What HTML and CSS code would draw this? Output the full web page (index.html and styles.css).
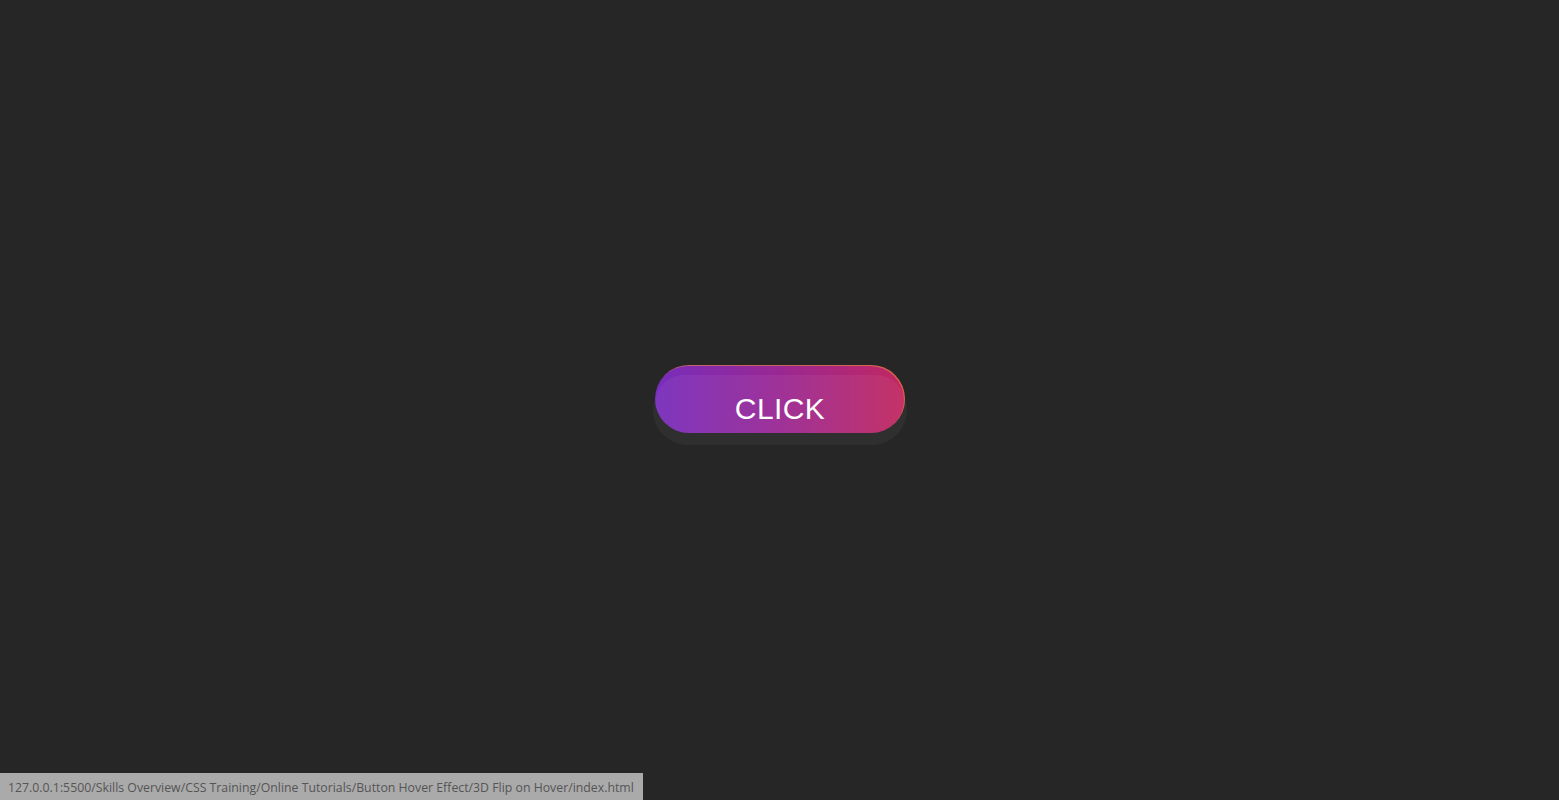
FILE: index.html
```html
<!DOCTYPE html>
<html>
<head>
<meta charset="utf-8">
<link rel="stylesheet" href="styles.css">
</head>
<body>
<main class="stage">
  <div class="btn-wrap">
    <div class="btn-shadow"></div>
    <button class="btn"><span class="btn-face"></span><span class="btn-label">CLICK</span></button>
  </div>
</main>
<div class="status">127.0.0.1:5500/Skills Overview/CSS Training/Online Tutorials/Button Hover Effect/3D Flip on Hover/index.html</div>
</body>
</html>
```
FILE: styles.css
```css
html, body {
  margin: 0;
  padding: 0;
  height: 100%;
  background: #262626;
  overflow: hidden;
}
.stage {
  height: 800px;
  display: flex;
  align-items: flex-start;
  justify-content: center;
  padding-top: 365px;
  box-sizing: border-box;
}
.btn-wrap {
  position: relative;
  width: 250px;
  height: 68px;
  margin-left: 1px;
}
.btn-shadow {
  position: absolute;
  left: -2px;
  right: -2px;
  top: 10px;
  height: 70px;
  border-radius: 35px;
  background: #2f2f2f;
}
.btn {
  position: relative;
  display: block;
  width: 250px;
  height: 68px;
  border: none;
  padding: 0;
  border-radius: 34px;
  background: linear-gradient(90deg, #772dbc 0%, #9a2893 50%, #c2285f 100%);
  box-shadow: inset -1px 1px 0 rgba(230, 140, 60, 0.6);
  overflow: hidden;
  cursor: pointer;
}
.btn-face {
  position: absolute;
  left: 0;
  right: 0;
  top: 10px;
  bottom: 0;
  border-radius: 34px;
  background: rgba(255, 255, 255, 0.05);
}
.btn-label {
  position: relative;
  display: block;
  padding-top: 20px;
  font-family: "Liberation Sans", Arial, sans-serif;
  font-size: 30px;
  color: #fff;
  letter-spacing: 0.4px;
}
.status {
  position: fixed;
  left: 0;
  bottom: 0;
  width: 643px;
  height: 27px;
  box-sizing: border-box;
  padding: 0 0 0 8px;
  line-height: 29px;
  background: #aaaaaa;
  color: #555;
  font-family: "Open Sans", "Noto Sans", sans-serif;
  font-size: 12.3px;
  white-space: nowrap;
  overflow: hidden;
}
```
